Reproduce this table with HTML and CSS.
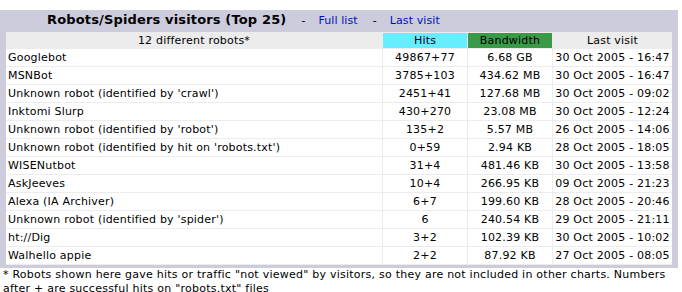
FILE: index.html
```html
<!DOCTYPE html>
<html>
<head>
<meta charset="utf-8">
<link rel="stylesheet" href="styles.css">
</head>
<body>
<div class="box">
  <div class="title">
    <span class="title-text">Robots/Spiders visitors (Top 25)</span>
    <span class="sep">-</span>
    <a class="link" href="#">Full list</a>
    <span class="sep">-</span>
    <a class="link" href="#">Last visit</a>
  </div>
  <table class="data">
    <thead>
      <tr class="head">
        <th class="c-name">12 different robots*</th>
        <th class="c-hits hits">Hits</th>
        <th class="c-bw bw">Bandwidth</th>
        <th class="c-last">Last visit</th>
      </tr>
    </thead>
    <tbody>
      <tr><td class="name">Googlebot</td><td>49867+77</td><td>6.68 GB</td><td>30 Oct 2005 - 16:47</td></tr>
      <tr><td class="name">MSNBot</td><td>3785+103</td><td>434.62 MB</td><td>30 Oct 2005 - 16:47</td></tr>
      <tr><td class="name">Unknown robot (identified by 'crawl')</td><td>2451+41</td><td>127.68 MB</td><td>30 Oct 2005 - 09:02</td></tr>
      <tr><td class="name">Inktomi Slurp</td><td>430+270</td><td>23.08 MB</td><td>30 Oct 2005 - 12:24</td></tr>
      <tr><td class="name">Unknown robot (identified by 'robot')</td><td>135+2</td><td>5.57 MB</td><td>26 Oct 2005 - 14:06</td></tr>
      <tr><td class="name">Unknown robot (identified by hit on 'robots.txt')</td><td>0+59</td><td>2.94 KB</td><td>28 Oct 2005 - 18:05</td></tr>
      <tr><td class="name">WISENutbot</td><td>31+4</td><td>481.46 KB</td><td>30 Oct 2005 - 13:58</td></tr>
      <tr><td class="name">AskJeeves</td><td>10+4</td><td>266.95 KB</td><td>09 Oct 2005 - 21:23</td></tr>
      <tr><td class="name">Alexa (IA Archiver)</td><td>6+7</td><td>199.60 KB</td><td>28 Oct 2005 - 20:46</td></tr>
      <tr><td class="name">Unknown robot (identified by 'spider')</td><td>6</td><td>240.54 KB</td><td>29 Oct 2005 - 21:11</td></tr>
      <tr><td class="name">ht://Dig</td><td>3+2</td><td>102.39 KB</td><td>30 Oct 2005 - 10:02</td></tr>
      <tr><td class="name">Walhello appie</td><td>2+2</td><td>87.92 KB</td><td>27 Oct 2005 - 08:05</td></tr>
    </tbody>
  </table>
</div>
<p class="note">* Robots shown here gave hits or traffic "not viewed" by visitors, so they are not included in other charts. Numbers after + are successful hits on "robots.txt" files</p>
</body>
</html>
```
FILE: styles.css
```css
html, body {
  margin: 0;
  padding: 0;
  background: #ffffff;
  font-family: "DejaVu Sans", Verdana, sans-serif;
  font-size: 11px;
  color: #000000;
}

.box {
  margin-top: 10px;
  width: 678px;
  box-sizing: border-box;
  background: #ccccdd;
  padding: 0 6px 3px 6px;
}

.title {
  display: flex;
  align-items: baseline;
  height: 22px;
  padding-left: 41px;
  box-sizing: border-box;
  padding-top: 2px;
}

.title-text {
  font-size: 13px;
  font-weight: bold;
  letter-spacing: 0.15px;
}

.sep {
  margin: 0 13px 0 15px;
  font-size: 11px;
}

.link {
  color: #0011bb;
  text-decoration: none;
  font-size: 11px;
  letter-spacing: 0.1px;
}

.data {
  width: 100%;
  border-collapse: collapse;
  background: #ffffff;
  table-layout: fixed;
}

.data th,
.data td {
  font-weight: normal;
  font-size: 11px;
  text-align: center;
  border: 1px solid #ececec;
  padding: 0 2px;
  white-space: nowrap;
  letter-spacing: 0.2px;
}

.data th {
  height: 15px;
  line-height: 15px;
  background: #ececec;
  border-color: #ececec;
}

.data td {
  height: 17px;
  line-height: 17px;
}

.data tr > :first-child { border-left: none; }
.data tr > :last-child { border-right: none; }

.c-name { width: 372px; }
.c-hits { width: 80px; }
.c-bw { width: 80px; }

.data th.hits { background: #66eeff; }
.data th.bw { background: #3a9a48; }

.data td.name {
  text-align: left;
}

.note {
  margin: 0;
  padding: 0 3px;
  line-height: 14px;
  font-size: 11px;
  letter-spacing: 0.24px;
}
```
